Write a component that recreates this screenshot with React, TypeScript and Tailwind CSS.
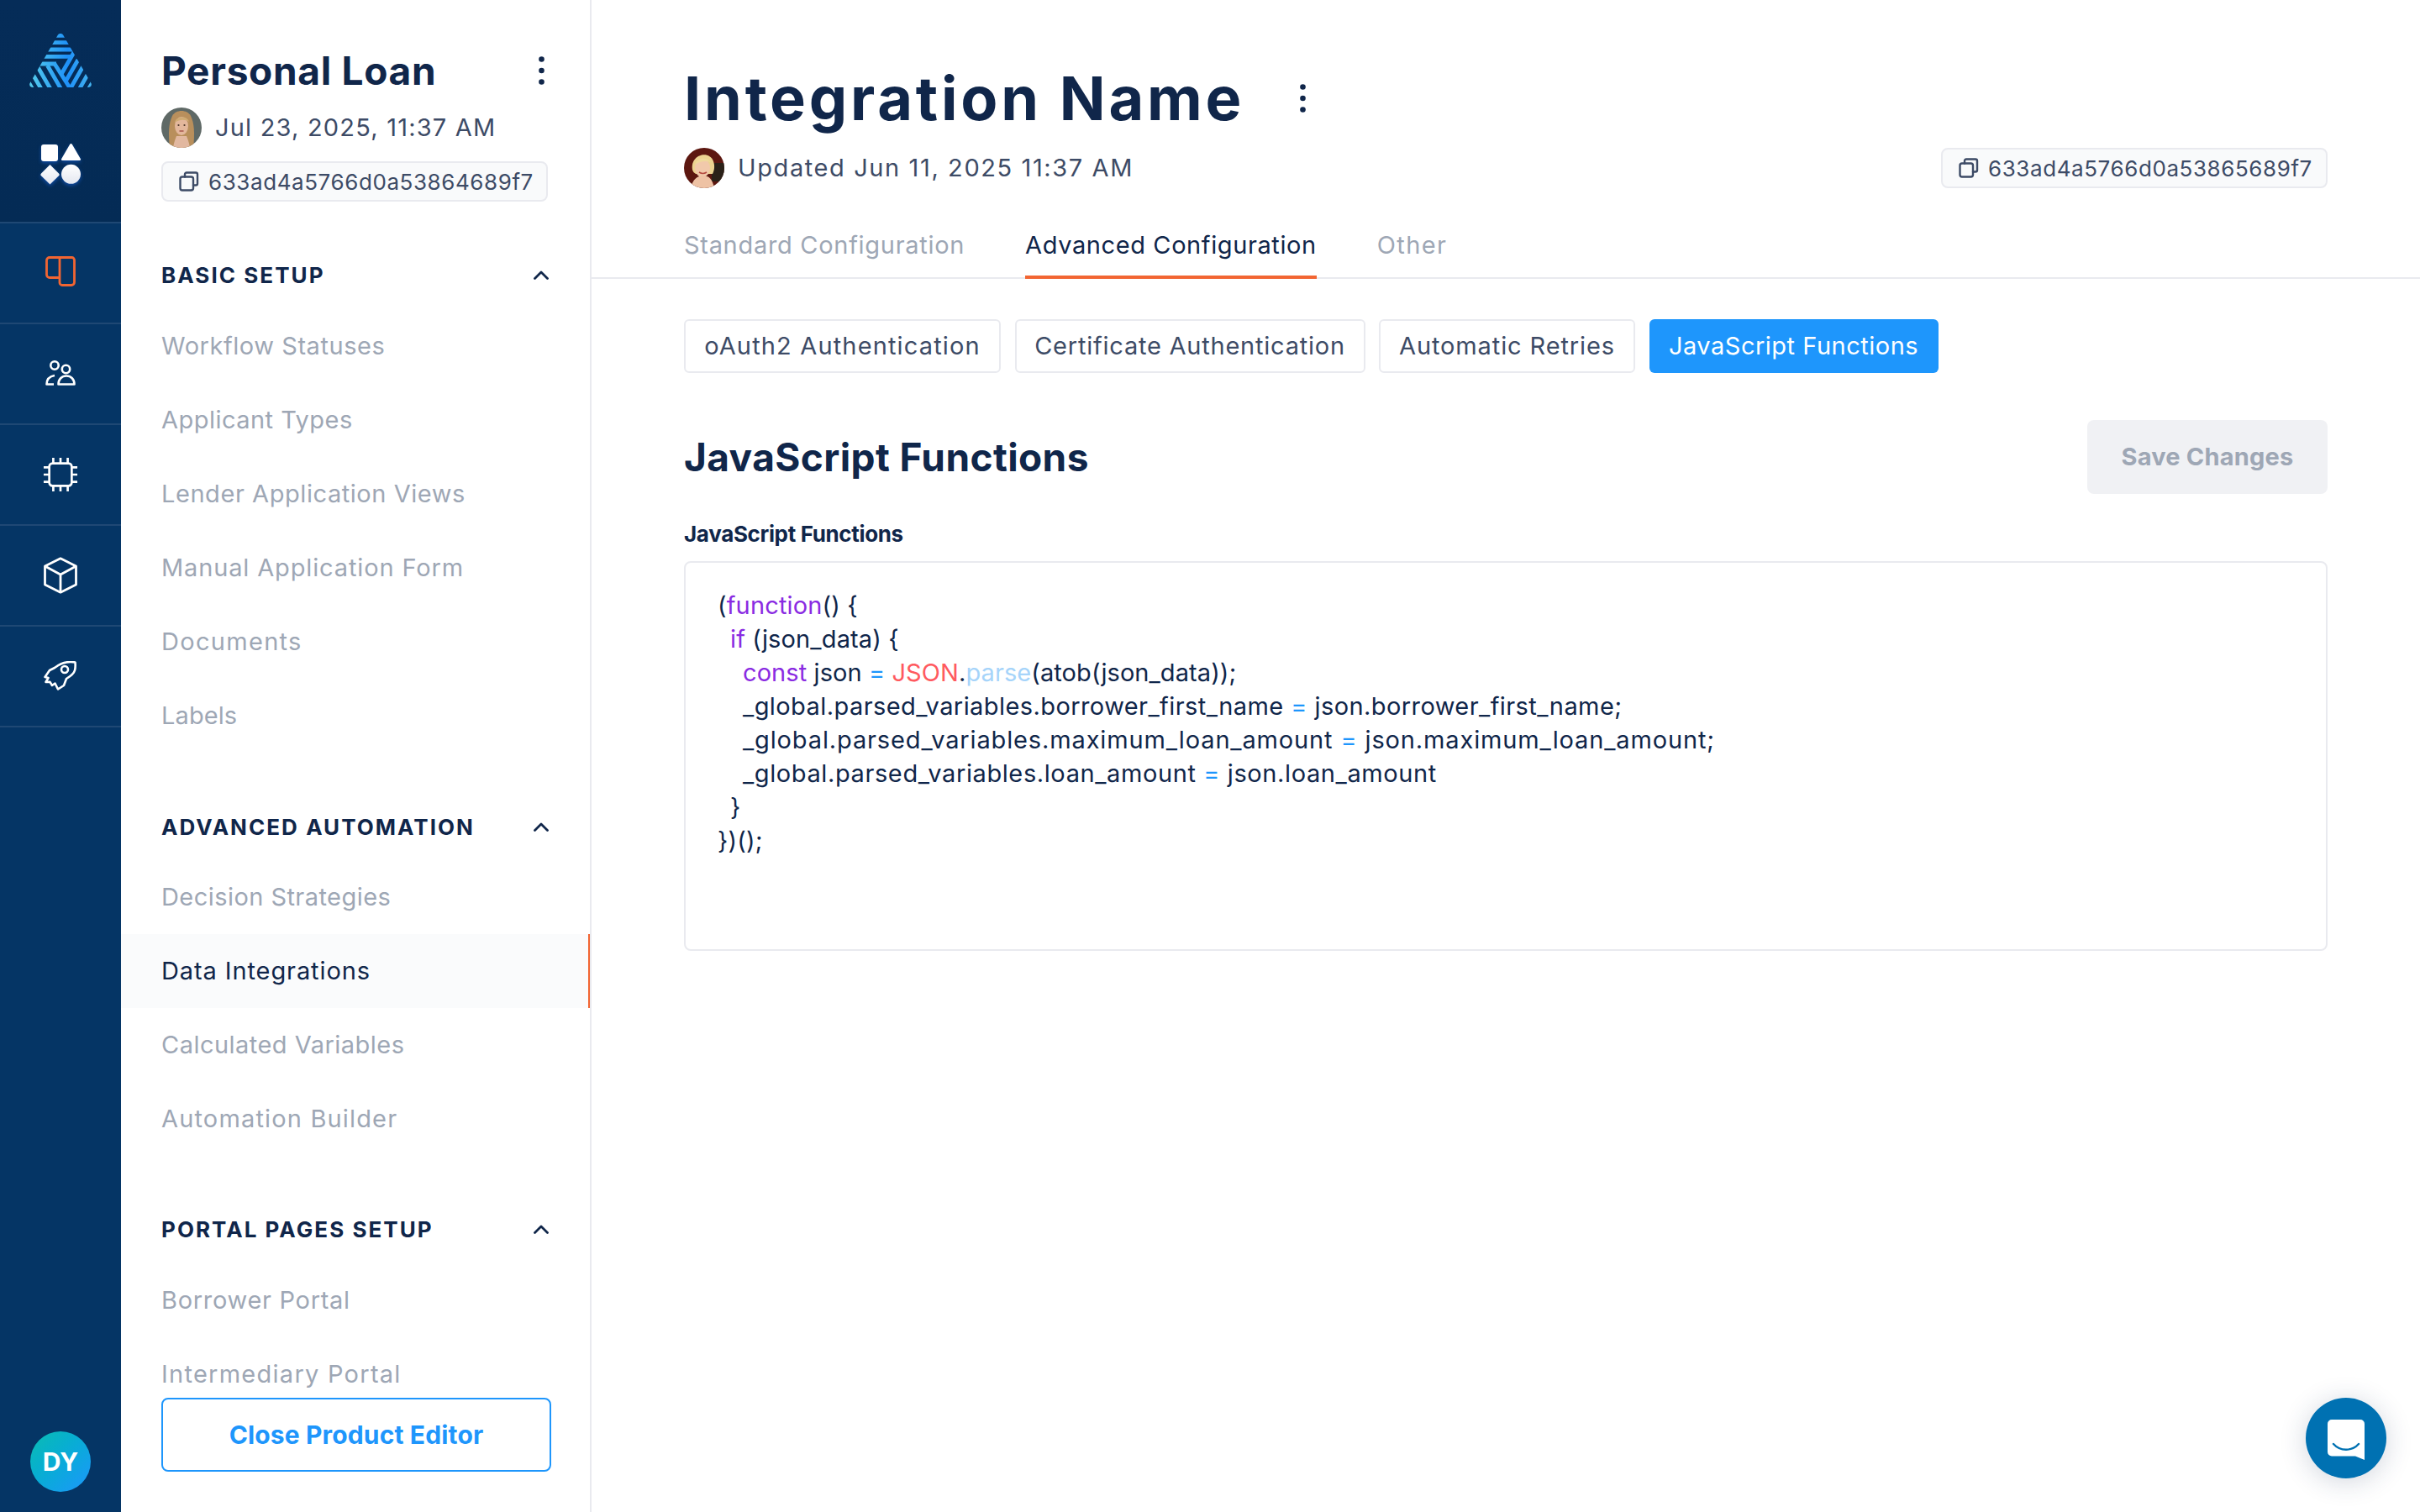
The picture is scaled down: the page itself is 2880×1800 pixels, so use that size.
import React from "react";

const F = "font-['Inter','Liberation_Sans',sans-serif]";

function CopyIcon() {
  return (
    <svg width="24" height="24" viewBox="0 0 24 24" fill="none" stroke="#3d4b66" strokeWidth="2.4" strokeLinejoin="round" strokeLinecap="round" className="shrink-0">
      <rect x="1.5" y="6.5" width="15.5" height="16" rx="2.5" />
      <path d="M7 6.5V3.5a2 2 0 0 1 2-2h11a2 2 0 0 1 2 2v11a2 2 0 0 1-2 2h-3" />
    </svg>
  );
}

function Kebab() {
  return (
    <svg width="7" height="34" viewBox="0 0 7 34" fill="#10264a">
      <circle cx="3.5" cy="3.5" r="3.3" />
      <circle cx="3.5" cy="17" r="3.3" />
      <circle cx="3.5" cy="30.5" r="3.3" />
    </svg>
  );
}

function Chevron() {
  return (
    <svg width="20" height="12" viewBox="0 0 20 12" fill="none" stroke="#10264a" strokeWidth="2.8" strokeLinecap="round" strokeLinejoin="round">
      <path d="M2.500 10.500L10 3l7.500 7.500" />
    </svg>
  );
}

function Logo() {
  return (
    <svg width="74" height="64" viewBox="0 0 74 64">
      <defs>
        <clipPath id="tri">
          <path d="M33.800 1.800a3.700 3.700 0 0 1 6.400 0L73.400 59a3.400 3.400 0 0 1-3 5H3.600a3.400 3.400 0 0 1-3-5z" />
        </clipPath>
        <linearGradient id="lg" gradientUnits="userSpaceOnUse" x1="0" y1="0" x2="74" y2="0">
          <stop offset="0" stopColor="#55cdec" />
          <stop offset="0.62" stopColor="#1e90f8" />
          <stop offset="1" stopColor="#45b4ef" />
        </linearGradient>
      </defs>
      <g clipPath="url(#tri)" fill="none" strokeWidth="4.800" stroke="url(#lg)">
        <path d="M0 2.300H74M0 10.700H74M0 19H74M0 27.300H50" />
        <path d="M0 36H32" />
        <path d="M-12.500 38L3.500 65.700M-2 38L14 65.700M9 38L25 65.700M21.500 38L37.500 65.700" />
        <path d="M37.600 49L53 22.300M43 57L58 31M49 65L65 37M60 65L76 37M71 65L80 50" />
        <path d="M30 36L49 66" />
      </g>
    </svg>
  );
}

function Shapes() {
  return (
    <svg width="56" height="56" viewBox="0 0 56 56" className="drop-shadow-[0_2px_2px_rgba(20,90,200,0.7)]">
      <defs>
        <linearGradient id="sg" x1="0" y1="0" x2="0" y2="1">
          <stop offset="0" stopColor="#ffffff" />
          <stop offset="1" stopColor="#e4e7f0" />
        </linearGradient>
      </defs>
      <rect x="5" y="2" width="20" height="20" rx="3" fill="#fff" />
      <path d="M40.500 1a1.500 1.500 0 0 1 1.300.8L51.800 19a1.400 1.400 0 0 1-1.200 2.100H30.400a1.400 1.400 0 0 1-1.200-2.100L39.200 1.800a1.500 1.500 0 0 1 1.300-.8z" fill="#fff" />
      <path d="M15.500 26l10.500 10.500a2 2 0 0 1 0 2.800L15.500 49.500 5 39.300a2 2 0 0 1 0-2.800z" fill="url(#sg)" />
      <circle cx="40.500" cy="37.300" r="11.500" fill="url(#sg)" />
    </svg>
  );
}

function PanelIcon() {
  return (
    <svg width="36" height="36" viewBox="0 0 36 36" fill="none" stroke="#f26532" strokeWidth="2.800" strokeLinejoin="round" className="-mt-[4px]">
      <path d="M17 25.500H5a3.500 3.500 0 0 1-3.500-3.500V5A3.500 3.500 0 0 1 5 1.500h12" />
      <path d="M17 1.500h14.500A3 3 0 0 1 34.500 4.500V31a3.500 3.500 0 0 1-3.500 3.500H20a3 3 0 0 1-3-3z" />
    </svg>
  );
}

function UsersIcon() {
  return (
    <svg width="36" height="30" viewBox="0 0 36 30" fill="none" stroke="#fff" strokeWidth="2.600" strokeLinejoin="round" className="-mt-[3px]">
      <circle cx="11" cy="6" r="4.700" />
      <circle cx="24.500" cy="10.500" r="4.700" />
      <path d="M10 28.500H1.500c0-5.500 3.500-9.500 9.500-10.500" />
      <path d="M15.500 28.500c0-6 4-10 9.500-10s9.500 4 9.500 10z" />
    </svg>
  );
}

function CpuIcon() {
  return (
    <svg width="42" height="42" viewBox="0 0 44 44" fill="none" stroke="#fff" strokeWidth="2.800" strokeLinecap="butt">
      <rect x="8" y="8" width="28" height="28" rx="4" />
      <path d="M13 1v7M22 1v7M31 1v7M13 36v7M22 36v7M31 36v7M1 13h7M1 22h7M1 31h7M36 13h7M36 22h7M36 31h7" />
    </svg>
  );
}

function BoxIcon() {
  return (
    <svg width="40" height="44" viewBox="0 0 40 44" fill="none" stroke="#fff" strokeWidth="2.800" strokeLinejoin="round">
      <path d="M20 1.800L38.500 11V33L20 42.200 1.500 33V11z" />
      <path d="M1.500 11L20 21 38.500 11M20 21V42.200" />
    </svg>
  );
}

function RocketIcon() {
  return (
    <svg width="40" height="36" viewBox="0 0 40 36" fill="none" stroke="#fff" strokeWidth="2.600" strokeLinejoin="round" strokeLinecap="round">
      <path d="M37.500 1.500C29 0 20 2.500 13 8L7 11 1.500 19l4 1L2.500 25l5-.2L10 29l3.500-2.500L17 33.500 24 29l3-8c5-3 9-6 10-10 1-3.500.8-6 .5-9.500z" />
      <circle cx="25" cy="10" r="4" />
    </svg>
  );
}

function ChatIcon() {
  return (
    <svg width="44" height="48" viewBox="0 0 44 48" fill="none" className="mt-[4px]">
      <path d="M5 0h34a5 5 0 0 1 5 5v43l-11-4.500H5a5 5 0 0 1-5-5V5a5 5 0 0 1 5-5z" fill="#fff" />
      <path d="M7 29c8 9 22 9 30 0" stroke="#0071b2" strokeWidth="2.400" strokeLinecap="round" />
    </svg>
  );
}

function Avatar({ variant }: { variant: 1 | 2 }) {
  return (
    <svg width="48" height="48" viewBox="0 0 48 48" className="shrink-0">
      <defs>
        <clipPath id={`av${variant}`}>
          <circle cx="24" cy="24" r="24" />
        </clipPath>
      </defs>
      <g clipPath={`url(#av${variant})`}>
        {variant === 1 ? (
          <>
            <rect width="48" height="48" fill="#5f6966" />
            <path d="M10 48C8 30 9 18 13 10 17 2 31 2 35 10c4 8 5 20 3 38z" fill="#b98f5c" />
            <path d="M14 48c1-6 2-9 4-14h12c2 5 3 8 4 14z" fill="#e2b8a0" />
            <ellipse cx="24" cy="22" rx="8" ry="11" fill="#e3b79c" />
            <path d="M16 18c1-8 15-9 17-1-5-3-11-3-17 1z" fill="#d0ab74" />
            <circle cx="20.500" cy="21" r="1.100" fill="#4a3328" />
            <circle cx="27.500" cy="21" r="1.100" fill="#4a3328" />
            <path d="M21.500 28h5" stroke="#a8574e" strokeWidth="1.400" />
          </>
        ) : (
          <>
            <rect width="48" height="48" fill="#5c1710" />
            <rect x="33" y="18" width="15" height="22" fill="#2a2118" />
            <path d="M10 26C7 8 30 2 35 16c2 6 1 11-1 15H14c-2-1-3.500-3-4-5z" fill="#ecd391" />
            <ellipse cx="22" cy="24" rx="9" ry="11" fill="#f1c9ab" />
            <path d="M13 20c2-8 14-10 19-3-7-2-13-1-19 3z" fill="#efd99c" />
            <path d="M8 48c2-10 8-15 15-15s11 5 13 15z" fill="#eec2a4" />
            <path d="M18 29c3 2 6 2 9 0" stroke="#b4493f" strokeWidth="1.600" fill="none" />
          </>
        )}
      </g>
    </svg>
  );
}

function IdChip({ id }: { id: string }) {
  return (
    <div className="w-[460px] h-[48px] flex items-center gap-[11px] pl-[19px] rounded-[8px] border-2 border-[#e9eaef] bg-[#f9fafb] text-[26px] tracking-[0.58px] text-[#3d4b66]">
      <CopyIcon />
      <span>{id}</span>
    </div>
  );
}

function SectionHead({ title, mt }: { title: string; mt: string }) {
  return (
    <div className={`${mt} h-[40px] flex items-center justify-between pl-[48px] pr-[48px]`}>
      <span className="text-[26px] font-bold tracking-[2.05px] text-[#10264a]">{title}</span>
      <Chevron />
    </div>
  );
}

function NavItem({ label, t, active }: { label: string; t: string; active?: boolean }) {
  return (
    <div className={`h-[88px] flex items-center pl-[48px] text-[29px] ${t} ${active ? "bg-[#fafbfc] text-[#10264a] border-r-2 border-[#f26532]" : "text-[#9ea7b5]"}`}>
      {label}
    </div>
  );
}

function RailRow({ children }: { children: React.ReactNode }) {
  return <div className="h-[120px] shrink-0 flex items-center justify-center border-b-2 border-[#1f4874]">{children}</div>;
}

function SubTab({ label, w, t, active }: { label: string; w: string; t: string; active?: boolean }) {
  return (
    <div className={`${w} ${t} h-[64px] flex items-center justify-center rounded-[6px] text-[29px] ${active ? "bg-[#1e96fc] text-white" : "border-2 border-[#e9eaef] bg-white text-[#3d4b66]"}`}>
      {label}
    </div>
  );
}

const P = "text-[#8a2be2]";
const E = "text-[#1e96fc]";

export default function App() {
  return (
    <div className={`${F} w-[2880px] h-[1800px] flex bg-white overflow-hidden relative`}>
      {/* rail */}
      <div className="w-[144px] shrink-0 h-full flex flex-col bg-[#053565]">
        <div className="h-[266px] shrink-0 flex flex-col items-center bg-gradient-to-b from-[#052c58] to-[#042b55] border-b-2 border-[#1f4874]">
          <div className="mt-[40px] h-[64px]"><Logo /></div>
          <div className="mt-[66px] -ml-[1px]"><Shapes /></div>
        </div>
        <RailRow><PanelIcon /></RailRow>
        <RailRow><UsersIcon /></RailRow>
        <RailRow><CpuIcon /></RailRow>
        <RailRow><BoxIcon /></RailRow>
        <RailRow><RocketIcon /></RailRow>
        <div className="flex-1 flex items-end justify-center pb-[24px]">
          <div className="w-[72px] h-[72px] rounded-full bg-gradient-to-br from-[#0fbcb0] to-[#1e96fc] flex items-center justify-center text-white text-[30px] font-bold">DY</div>
        </div>
      </div>

      {/* panel */}
      <div className="w-[560px] shrink-0 h-full relative border-r-2 border-[#e9eaef] flex flex-col">
        <div className="pl-[48px] pr-[48px]">
          <div className="h-[60px] mt-[54px] flex items-center justify-between">
            <span className="text-[46px] font-bold tracking-[0.7px] text-[#10264a]">Personal Loan</span>
            <span className="flex items-center mr-[6px]"><Kebab /></span>
          </div>
          <div className="mt-[14px] h-[48px] flex items-center gap-[16px] text-[29px] tracking-[1.2px] text-[#3d4b66]">
            <Avatar variant={1} />
            <span>Jul 23, 2025, 11:37 AM</span>
          </div>
          <div className="mt-[16px]">
            <IdChip id="633ad4a5766d0a53864689f7" />
          </div>
        </div>
        <SectionHead title="BASIC SETUP" mt="mt-[67px]" />
        <div className="mt-[21px]">
          <NavItem label="Workflow Statuses" t="tracking-[0.55px]" />
          <NavItem label="Applicant Types" t="tracking-[0.47px]" />
          <NavItem label="Lender Application Views" t="tracking-[0.56px]" />
          <NavItem label="Manual Application Form" t="tracking-[0.86px]" />
          <NavItem label="Documents" t="tracking-[1.3px]" />
          <NavItem label="Labels" t="tracking-[0.1px]" />
        </div>
        <SectionHead title="ADVANCED AUTOMATION" mt="mt-[68px]" />
        <div className="mt-[20px]">
          <NavItem label="Decision Strategies" t="tracking-[0.44px]" />
          <NavItem label="Data Integrations" t="tracking-[0.9px]" active />
          <NavItem label="Calculated Variables" t="tracking-[0.47px]" />
          <NavItem label="Automation Builder" t="tracking-[1.16px]" />
        </div>
        <SectionHead title="PORTAL PAGES SETUP" mt="mt-[67px]" />
        <div className="mt-[21px]">
          <NavItem label="Borrower Portal" t="tracking-[0.7px]" />
          <NavItem label="Intermediary Portal" t="tracking-[1.26px]" />
        </div>
        <div className="absolute left-[48px] top-[1664px] w-[464px] h-[88px] rounded-[8px] border-2 border-[#1e96fc] bg-white flex items-center justify-center text-[30px] font-bold tracking-[0.15px] text-[#1e96fc]">
          Close Product Editor
        </div>
      </div>

      {/* main */}
      <div className="flex-1 h-full flex flex-col">
        <div className="h-[332px] shrink-0 border-b-2 border-[#e9eaef] pl-[110px] pr-[110px] flex flex-col">
          <div className="h-[96px] mt-[69px] flex items-center">
            <span className="text-[72px] font-bold tracking-[3.8px] text-[#10264a]">Integration Name</span>
            <span className="ml-[66px] flex items-center"><Kebab /></span>
          </div>
          <div className="mt-[11px] h-[48px] flex items-center justify-between">
            <div className="flex items-center gap-[16px] text-[29px] tracking-[1.6px] text-[#3d4b66]">
              <Avatar variant={2} />
              <span>Updated Jun 11, 2025 11:37 AM</span>
            </div>
            <IdChip id="633ad4a5766d0a53865689f7" />
          </div>
          <div className="mt-auto -mb-[2px] flex items-start gap-[72px] text-[29px]">
            <div className="h-[60px] leading-[40px] tracking-[0.7px] text-[#9ea7b5]">Standard Configuration</div>
            <div className="h-[60px] leading-[40px] tracking-[0.6px] text-[#10264a] border-b-[4px] border-[#f26532]">Advanced Configuration</div>
            <div className="h-[60px] leading-[40px] tracking-[1.4px] text-[#9ea7b5]">Other</div>
          </div>
        </div>

        <div className="pl-[110px] pr-[110px] flex flex-col">
          <div className="mt-[48px] flex items-center gap-[16.500px]">
            <SubTab label="oAuth2 Authentication" w="w-[377px]" t="tracking-[1.15px]" />
            <SubTab label="Certificate Authentication" w="w-[417px]" t="tracking-[0.77px]" />
            <SubTab label="Automatic Retries" w="w-[305px]" t="tracking-[0.88px]" />
            <SubTab label="JavaScript Functions" w="w-[344px]" t="tracking-[0.5px]" active />
          </div>

          <div className="mt-[56px] h-[88px] flex items-center justify-between">
            <span className="text-[46px] font-bold tracking-[0.4px] text-[#10264a]">JavaScript Functions</span>
            <div className="w-[286px] h-[88px] rounded-[8px] bg-[#f0f1f4] flex items-center justify-center text-[29px] font-bold tracking-[0.2px] text-[#9ea7b5]">Save Changes</div>
          </div>

          <div className="mt-[29px] h-[36px] flex items-center text-[26px] font-bold tracking-[-0.35px] text-[#10264a]">JavaScript Functions</div>
          <div className="mt-[15px] h-[464px] rounded-[8px] border-2 border-[#e9eaef] pt-[31px] pl-[38px] text-[29px] leading-[40px] text-[#10264a]">
            <div className="tracking-[0.15px]">(<span className={P}>function</span>() {"{"}</div>
            <div className="pl-[15px] tracking-[0.15px]"><span className={P}>if</span> (json_data) {"{"}</div>
            <div className="pl-[30px] tracking-[0.08px]"><span className={P}>const</span> json <span className={E}>=</span> <span className="text-[#ff5a5f]">JSON</span>.<span className="text-[#a6d4fa]">parse</span>(atob(json_data));</div>
            <div className="pl-[30px] tracking-[0.42px]">_global.parsed_variables.borrower_first_name <span className={E}>=</span> json.borrower_first_name;</div>
            <div className="pl-[30px] tracking-[0.86px]">_global.parsed_variables.maximum_loan_amount <span className={E}>=</span> json.maximum_loan_amount;</div>
            <div className="pl-[30px] tracking-[0.6px]">_global.parsed_variables.loan_amount <span className={E}>=</span> json.loan_amount</div>
            <div className="pl-[15px]">{"}"}</div>
            <div className="tracking-[0.15px]">{"})();"}</div>
          </div>
        </div>
      </div>

      {/* chat launcher */}
      <div className="absolute left-[2744px] top-[1664px] w-[96px] h-[96px] rounded-full bg-[#0071b2] flex items-center justify-center shadow-[0_4px_32px_rgba(30,50,90,0.2)]">
        <ChatIcon />
      </div>
    </div>
  );
}
